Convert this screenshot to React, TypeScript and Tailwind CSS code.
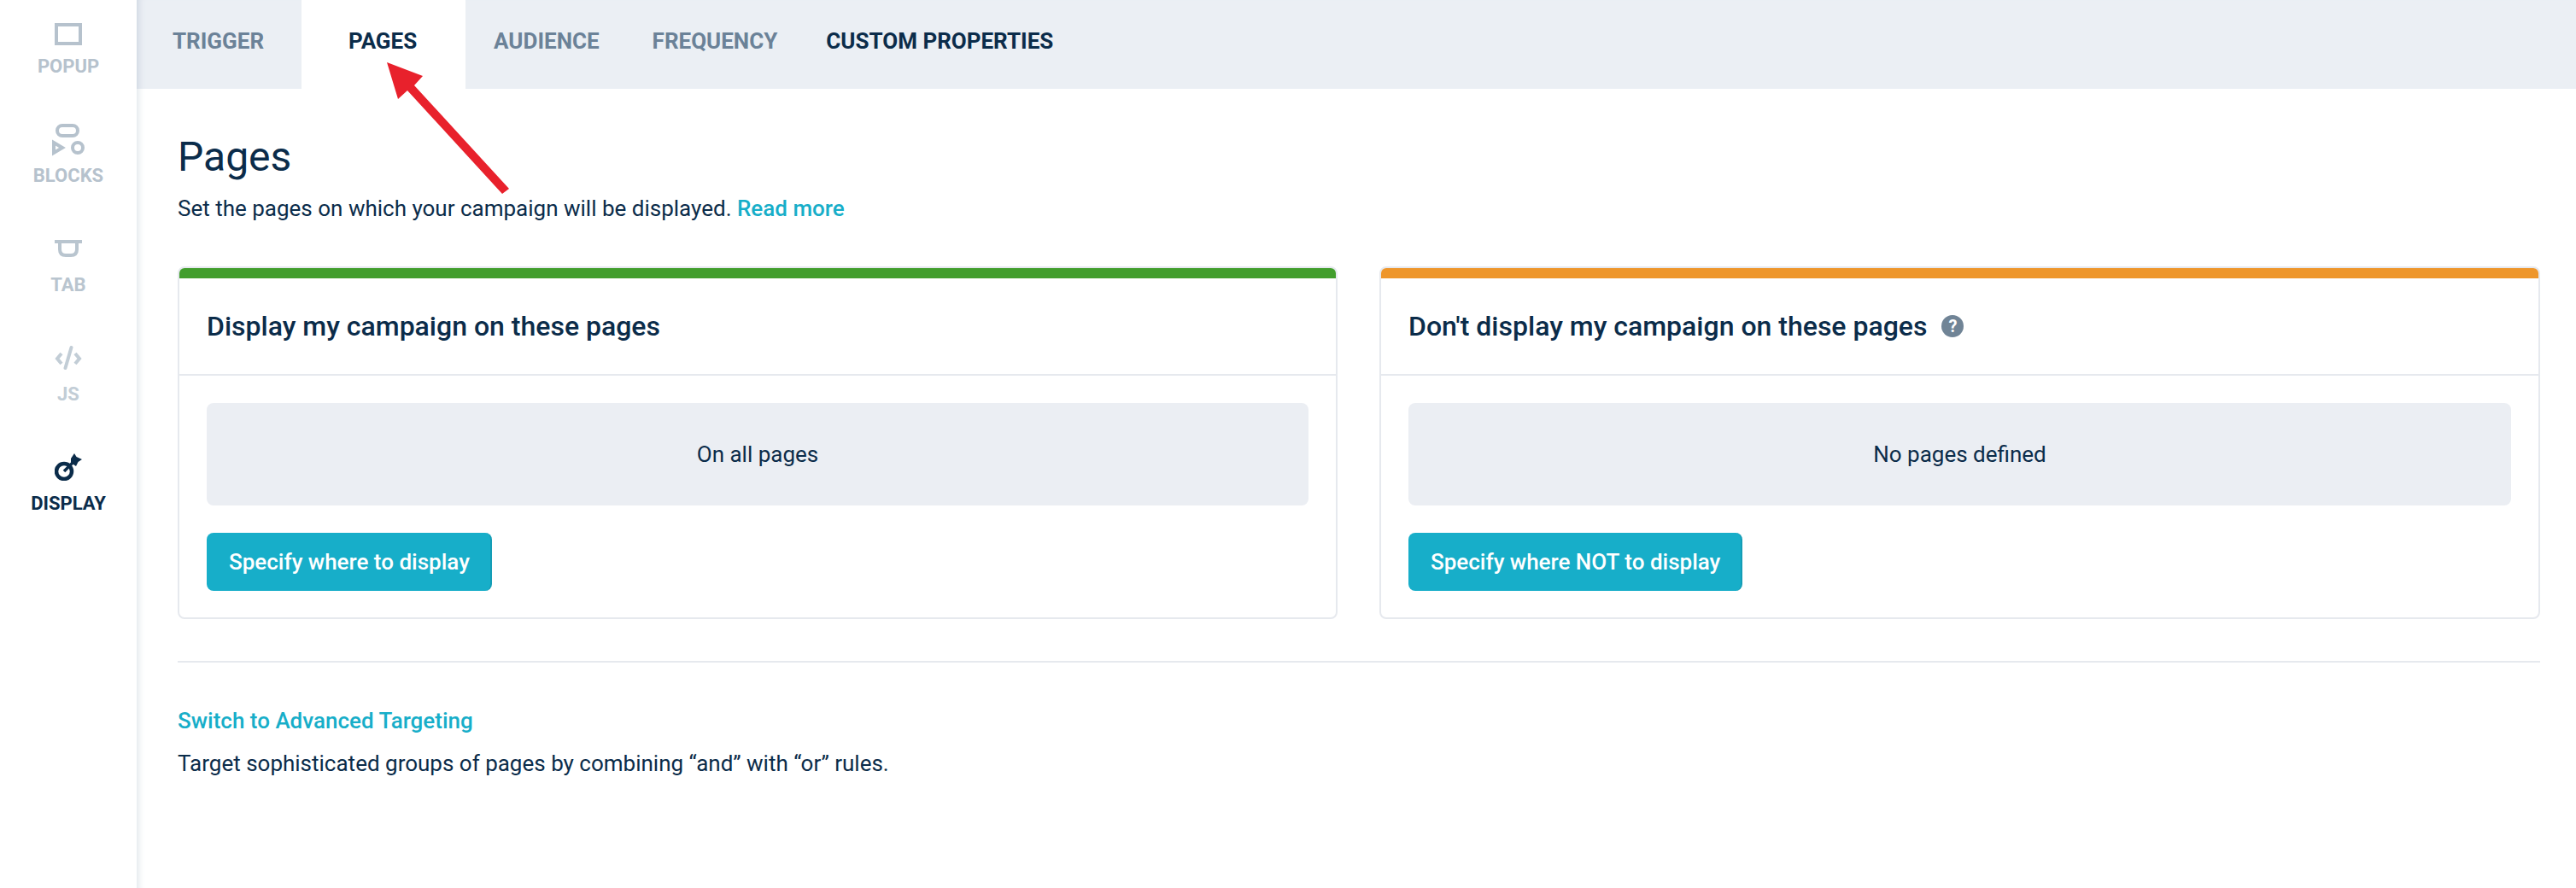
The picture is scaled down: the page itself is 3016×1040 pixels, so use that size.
import React from "react";

function PopupIcon() {
  return (
    <svg width="32" height="26" viewBox="0 0 32 26" fill="none">
      <rect x="2" y="2" width="28" height="22" stroke="currentColor" strokeWidth="4" />
    </svg>
  );
}

function BlocksIcon() {
  return (
    <svg width="38" height="38" viewBox="0 0 38 38" fill="none" stroke="currentColor" strokeWidth="4">
      <rect x="6" y="2" width="24" height="12" rx="6" />
      <path d="M2 22 L12 28 L2 34 Z" />
      <circle cx="30" cy="28" r="6" />
    </svg>
  );
}

function TabIcon() {
  return (
    <svg width="32" height="20" viewBox="0 0 32 20" fill="none" stroke="currentColor" strokeWidth="4">
      <path d="M0 2 H32" />
      <path d="M6 2 V11 Q6 18 13 18 H19 Q26 18 26 11 V2" />
    </svg>
  );
}

function CodeIcon() {
  return (
    <svg width="32" height="28" viewBox="0 0 32 28" fill="none" stroke="currentColor" strokeWidth="4">
      <path d="M8 9 L3 15 L8 21" />
      <path d="M24 9 L29 15 L24 21" />
      <path d="M19.5 2 L12.5 26" strokeLinecap="round" />
    </svg>
  );
}

function DartIcon() {
  return (
    <svg width="32" height="32" viewBox="0 0 32 32" fill="none">
      <circle cx="11" cy="21" r="9" stroke="currentColor" strokeWidth="4.5" />
      <path d="M11 21 L24 8" stroke="currentColor" strokeWidth="3.5" />
      <path d="M19 6 L23 0 L25.5 4 L32 7 L27.5 10 L25 15 L19 11 Z" fill="currentColor" />
    </svg>
  );
}

const sideItems = [
  { label: "POPUP", icon: <PopupIcon />, cls: "h-[95px] text-[#b6c2cd]", gap: "mb-[8px]" },
  { label: "BLOCKS", icon: <BlocksIcon />, cls: "h-[128px] text-[#b6c2cd]", gap: "mb-[6px]" },
  { label: "TAB", icon: <TabIcon />, cls: "h-[128px] text-[#b9c5cf]", gap: "mb-[16px]" },
  { label: "JS", icon: <CodeIcon />, cls: "h-[128px] text-[#c2cdd6]", gap: "mb-[12px]" },
  { label: "DISPLAY", icon: <DartIcon />, cls: "h-[128px] text-[#0b2c4a]", gap: "mb-[10px]" },
];

function Card({ bar, title, help, box, button }: { bar: string; title: string; help?: boolean; box: string; button: string }) {
  return (
    <div className="border-2 border-[#e6e9ee] rounded-[8px] overflow-hidden h-[413px] bg-white">
      <div className={`h-[12px] ${bar}`} />
      <div className="h-[114px] border-b-2 border-[#e6e9ee] px-[32px] flex items-center gap-[17px]">
        <h2 className="text-[32px] font-medium text-[#0b2c4a]">{title}</h2>
        {help && (
          <span className="w-[26px] h-[26px] rounded-full bg-[#708496] text-white text-[20px] font-bold flex items-center justify-center">?</span>
        )}
      </div>
      <div className="px-[32px] pt-[32px]">
        <div className="h-[120px] rounded-[8px] bg-[#ebeef3] flex items-center justify-center text-[26px] text-[#0b2c4a]">{box}</div>
        <button className="mt-[32px] h-[68px] pl-[26px] pr-[24px] rounded-[8px] bg-[#17aec9] border-r-2 border-[#149db6] text-white text-[26px] font-medium">
          {button}
        </button>
      </div>
    </div>
  );
}

export default function App() {
  return (
    <div className="flex w-[3016px] h-[1040px] overflow-hidden bg-white font-['Roboto',sans-serif] relative">
      <aside className="w-[160px] shrink-0 flex flex-col items-center text-[22px] font-bold">
        {sideItems.map((item) => (
          <div key={item.label} className={`flex flex-col items-center justify-end ${item.cls}`}>
            <div className={item.gap}>{item.icon}</div>
            <span className="leading-[34px]">{item.label}</span>
          </div>
        ))}
      </aside>

      <main className="flex-1 flex flex-col shadow-[inset_10px_0_8px_-8px_#dfe4ea]">
        <nav className="h-[104px] bg-[#ebeff4] shadow-[inset_10px_0_8px_-8px_#ccd5e0] flex text-[26px] font-bold text-[#6b8298]">
          <div className="pl-[42px] pr-[44px] pb-[8px] flex items-center">TRIGGER</div>
          <div className="w-[192px] bg-white text-[#0b2c4a] pb-[8px] pr-[2px] flex items-center justify-center">PAGES</div>
          <div className="pl-[33px] pr-[62px] pb-[8px] flex items-center">AUDIENCE</div>
          <div className="pr-[57px] pb-[8px] flex items-center">FREQUENCY</div>
          <div className="pb-[8px] flex items-center text-[#0b2c4a]">CUSTOM PROPERTIES</div>
        </nav>

        <div className="pl-[48px] pr-[42px]">
          <h1 className="mt-[50px] text-[48px] leading-[60px] text-[#0b2c4a]">Pages</h1>
          <p className="mt-[12px] text-[26px] leading-[36px] text-[#0b2c4a]">
            Set the pages on which your campaign will be displayed.{" "}
            <span className="font-medium text-[#17aec9]">Read more</span>
          </p>
          <div className="mt-[50px] grid grid-cols-[1358px_1359px] gap-x-[49px]">
            <Card bar="bg-[#429e2d]" title="Display my campaign on these pages" box="On all pages" button="Specify where to display" />
            <Card bar="bg-[#ee962b]" title="Don't display my campaign on these pages" help box="No pages defined" button="Specify where NOT to display" />
          </div>
          <div className="mt-[49px] h-[2px] bg-[#e6e9ee]" />
          <div className="mt-[50px] text-[26px] leading-[36px] font-medium text-[#17aec9]">Switch to Advanced Targeting</div>
          <p className="mt-[14px] text-[26px] leading-[36px] text-[#0b2c4a]">Target sophisticated groups of pages by combining “and” with “or” rules.</p>
        </div>
      </main>

      {/* annotation arrow drawn over the page */}
      <svg className="absolute left-[440px] top-[70px] pointer-events-none" width="170" height="170" viewBox="0 0 170 170">
        <path d="M13 3 L55 19 L45 30 L156 151 L148 157 L37 36 L26 46 Z" fill="#e8212c" />
      </svg>
    </div>
  );
}
